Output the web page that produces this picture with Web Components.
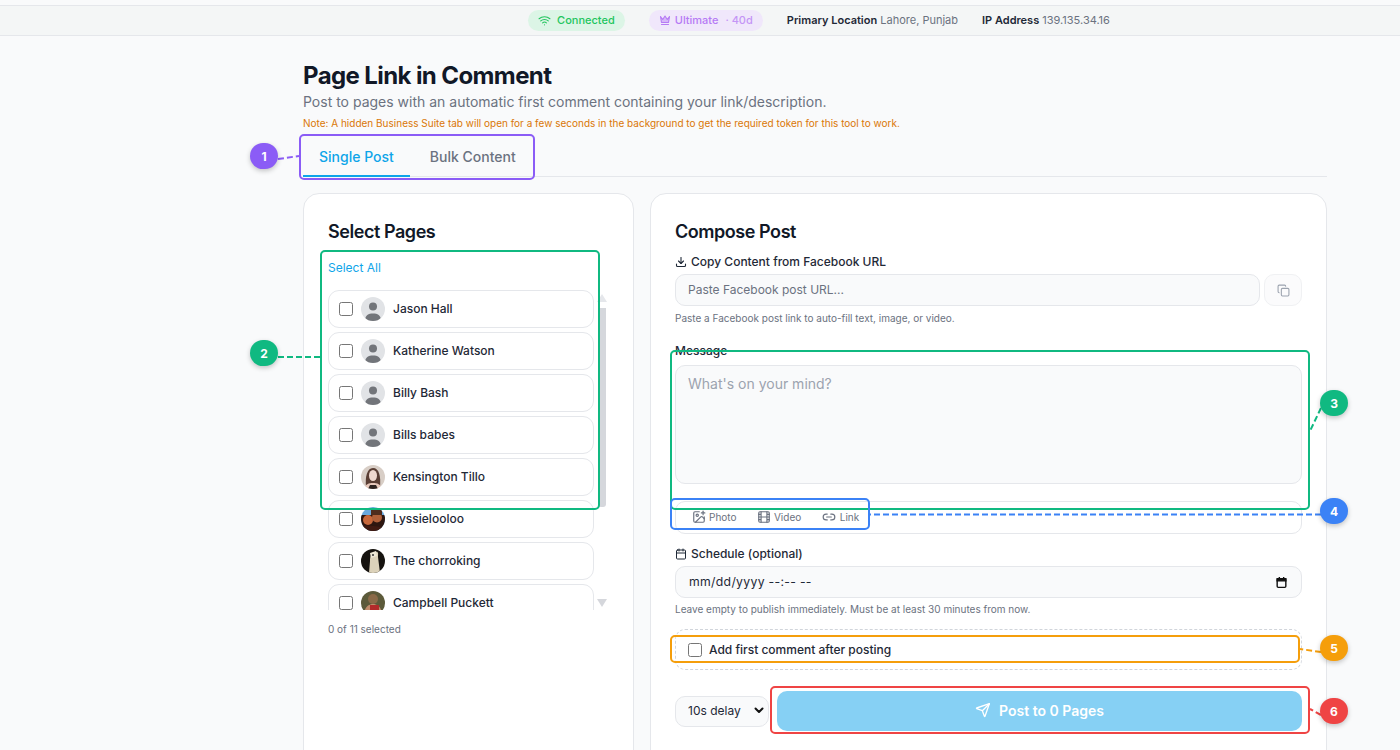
<!DOCTYPE html>
<html><head><meta charset="utf-8">
<style>
html,body{margin:0;padding:0;height:750px;overflow:hidden;background:#f9fafb;font-family:Inter,"Liberation Sans",sans-serif;color:#111827}
</style></head><body>
<template id="t-top"><style>
:host{display:flex;align-items:center;justify-content:center;gap:24px;height:31px;box-sizing:border-box;margin-top:5px;background:#f4f6f6;border-top:1px solid #e5e7eb;border-bottom:1px solid #e5e7eb;font-size:11px;color:#6b7280;padding-left:238px}
.pill{display:inline-flex;align-items:center;gap:6px;height:21px;box-sizing:border-box;border-radius:11px;padding:0 10px 1px;font-weight:500}
.g{background:#dcf5e6;color:#22c55e}.p{background:#f0e7fb;color:#b67af5;gap:4px}
b{font-weight:600;color:#1f2937}.i{white-space:pre;padding-bottom:1px}
.f{opacity:.75}
</style>
<span class="pill g"><svg width="13" height="13" viewBox="0 0 24 24" fill="none" stroke="currentColor" stroke-width="2" stroke-linecap="round"><path d="M2 8.800a15 15 0 0 1 20 0"/><path d="M5 12.900a10 10 0 0 1 14 0"/><path d="M8.500 16.400a5 5 0 0 1 7 0"/><path d="M12 20h.01"/></svg>Connected</span>
<span class="pill p"><svg width="12" height="12" viewBox="0 0 24 24" fill="#b67af5" fill-opacity=".45" stroke="currentColor" stroke-width="2.200" stroke-linejoin="round" stroke-linecap="round"><path d="M3 5l4.500 6L12 4l4.500 7L21 5l-2 12H5z"/><path d="M5 21h14"/></svg>Ultimate<span class="f">&nbsp;· 40d</span></span>
<span class="i"><b>Primary Location</b> Lahore, Punjab</span>
<span class="i"><b>IP Address</b> 139.135.34.16</span>
</template>

<template id="t-tabs"><style>
:host{display:flex;border-bottom:1px solid #e5e7eb;height:41px;box-sizing:border-box;font-size:14px;font-weight:500;margin-top:6px}
span{display:flex;align-items:center;padding:2px 16px 0;height:41px;margin-bottom:-1px;color:#6b7280;box-sizing:border-box;border-bottom:2px solid transparent}
.a{color:#0ea5e9;border-bottom-color:#0ea5e9}
.b{padding:2px 20px 0}
</style><span class="a">Single Post</span><span class="b">Bulk Content</span></template>

<template id="t-card"><style>
:host{display:block;background:#fff;border:1px solid #e5e7eb;border-radius:16px;padding:24px;box-sizing:border-box;height:640px}
h2{margin:0;font-size:18px;line-height:28px;font-weight:600;letter-spacing:-.45px;color:#111827}
</style><h2><slot name="title"></slot></h2><slot></slot></template>

<template id="t-page"><style>
:host{display:flex;align-items:center;height:38px;box-sizing:border-box;border:1px solid #e5e7eb;border-radius:11px;padding:0 10px;gap:8px;font-size:12px;font-weight:450;color:#1f2937;flex:none;background:#fff}
.c{width:14px;height:14px;border:1px solid #767676;border-radius:2.5px;box-sizing:border-box;background:#fff;flex:none}
.av{width:24px;height:24px;border-radius:50%;overflow:hidden;flex:none;display:block;margin-right:0}
.n{padding-bottom:2px}
::slotted(svg){width:24px;height:24px;display:block}
</style><span class="c"></span><span class="av"><slot name="a"></slot></span><span class="n"><slot></slot></span></template>

<template id="t-scroll"><style>
:host{display:flex;flex-direction:column;align-items:center;width:8px;height:320px;margin-left:4px;position:relative;flex:none}
.u,.d{width:0;height:0;border-left:5px solid transparent;border-right:5px solid transparent}
.u{border-bottom:8px solid #e5e7eb;margin-top:4px}
.t{width:8px;height:199px;margin-top:6px;background:#d5d7dc;border-radius:0 0 3px 3px}
.d{border-top:8px solid #d5d7dc;margin-top:92px}
</style><i class="u"></i><i class="t"></i><i class="d"></i></template>

<template id="t-anno"><style>
:host{position:absolute;display:flex;align-items:center;justify-content:center;width:28px;height:26px;border-radius:13px;background:var(--c);color:#fff;font-size:12px;font-weight:700;box-shadow:0 2px 5px rgba(0,0,0,.22)}
</style><slot></slot></template>

<template id="t-box"><style>
:host{position:absolute;display:block;box-sizing:border-box;border:2px solid var(--c);border-radius:5px;pointer-events:none}
</style></template>

<template id="t-field-label"><style>
:host{display:flex;align-items:center;gap:4px;font-size:12px;font-weight:500;color:#1f2937;line-height:16px}
svg{display:block}
</style><slot></slot></template>

<template id="t-compose"><style>
:host{display:block}
.lab{margin-top:8px}
.row{display:flex;gap:4px;margin-top:4px}
.in{flex:1;height:32px;box-sizing:border-box;background:#f9fafb;border:1px solid #e5e7eb;border-radius:10px;padding:0 12px 2px;display:flex;align-items:center;font-size:12px;color:#6b7280}
.cp{width:38px;height:32px;box-sizing:border-box;border:1px solid #f0f1f3;background:#fbfbfc;border-radius:10px;display:flex;align-items:center;justify-content:center;color:#9ca3af}
.hint{font-size:10px;line-height:14px;color:#6b7280;margin-top:5px}
.hint.h2{margin-top:4px}
.msg{margin-top:18px}
.ta{height:119px;box-sizing:border-box;background:#f9fafb;border:1px solid #e5e7eb;border-radius:10px;padding:9px 12px;font-size:14px;line-height:18px;color:#9ca3af;margin-top:6px}
.tools{height:33px;box-sizing:border-box;border:1px solid #e5e7eb;border-radius:10px;display:flex;align-items:center;gap:20.5px;padding:0 16px 1px;margin-top:17px;font-size:10px;color:#6b7280}
.tools span{display:inline-flex;align-items:center;gap:3px}
.tools span.l{gap:4px}
.sch{margin-top:12px}
.dt{height:32px;box-sizing:border-box;background:#f9fafb;border:1px solid #e5e7eb;border-radius:10px;padding:0 13px;display:flex;align-items:center;justify-content:space-between;font-size:12.25px;color:#1f2937;margin-top:4px;letter-spacing:.3px}
.dt span{padding-bottom:2px}
.dash{height:41px;box-sizing:border-box;border:1px dashed #d1d5db;border-radius:10px;margin-top:13px;display:flex;align-items:center;gap:7px;padding:0 12px;font-size:12px;font-weight:500;color:#1f2937}
.c{width:14px;height:14px;border:1px solid #767676;border-radius:2.5px;box-sizing:border-box}
.foot{display:flex;align-items:center;gap:8px;margin-top:21px}
.sel{width:94px;height:31px;box-sizing:border-box;border:1px solid #e5e7eb;background:#f9fafb;border-radius:10px;display:flex;align-items:center;justify-content:space-between;padding:0 3px 2px 12px;font-size:12px;color:#1f2937}
.btn{flex:1;height:40px;box-sizing:border-box;padding-bottom:2px;background:#86d0f4;border-radius:10px;color:#fff;font-size:14px;font-weight:600;display:flex;align-items:center;justify-content:center;gap:8px}
</style>
<field-label class="lab"><svg width="12" height="12" viewBox="0 0 24 24" fill="none" stroke="#1f2937" stroke-width="2.200" stroke-linecap="round" stroke-linejoin="round"><path d="M12 3v12"/><path d="M7 10l5 5 5-5"/><path d="M3 16v3a2 2 0 0 0 2 2h14a2 2 0 0 0 2-2v-3"/></svg>Copy Content from Facebook URL</field-label>
<div class="row"><div class="in">Paste Facebook post URL...</div><div class="cp"><svg width="13" height="13" viewBox="0 0 24 24" fill="none" stroke="currentColor" stroke-width="2" stroke-linecap="round" stroke-linejoin="round"><rect x="8" y="8" width="14" height="14" rx="2"/><path d="M4 16a2 2 0 0 1-2-2V4a2 2 0 0 1 2-2h10a2 2 0 0 1 2 2"/></svg></div></div>
<div class="hint">Paste a Facebook post link to auto-fill text, image, or video.</div>
<field-label class="msg">Message</field-label>
<div class="ta">What's on your mind?</div>
<div class="tools">
<span><svg width="14" height="14" viewBox="0 0 24 24" fill="none" stroke="currentColor" stroke-width="2" stroke-linecap="round" stroke-linejoin="round"><path d="M16 5h6"/><path d="M19 2v6"/><path d="M21 11.500V19a2 2 0 0 1-2 2H5a2 2 0 0 1-2-2V5a2 2 0 0 1 2-2h7.500"/><path d="M21 15l-3.100-3.100a2 2 0 0 0-2.800 0L6 21"/><circle cx="9" cy="9" r="2"/></svg>Photo</span>
<span><svg width="14" height="14" viewBox="0 0 24 24" fill="none" stroke="currentColor" stroke-width="2" stroke-linecap="round" stroke-linejoin="round"><rect x="3" y="3" width="18" height="18" rx="2"/><path d="M7 3v18M17 3v18M3 7.500h4M3 12h18M3 16.500h4M17 7.500h4M17 16.500h4"/></svg>Video</span>
<span class="l"><svg width="14" height="14" viewBox="0 0 24 24" fill="none" stroke="currentColor" stroke-width="2" stroke-linecap="round" stroke-linejoin="round"><path d="M9 17H7A5 5 0 0 1 7 7h2"/><path d="M15 7h2a5 5 0 1 1 0 10h-2"/><path d="M8 12h8"/></svg>Link</span>
</div>
<field-label class="sch"><svg width="12" height="12" viewBox="0 0 24 24" fill="none" stroke="#1f2937" stroke-width="2" stroke-linecap="round" stroke-linejoin="round"><path d="M8 2v4M16 2v4"/><rect x="3" y="4" width="18" height="18" rx="2"/><path d="M3 10h18"/></svg>Schedule (optional)</field-label>
<div class="dt"><span>mm/dd/yyyy --:-- --</span><svg width="13" height="13" viewBox="0 0 24 24" fill="none" stroke="#111" stroke-width="2.600"><rect x="4" y="5" width="16" height="16" rx="2"/><path d="M4 5h16v4H4z" fill="#111"/><path d="M8 2v3M16 2v3"/></svg></div>
<div class="hint h2">Leave empty to publish immediately. Must be at least 30 minutes from now.</div>
<div class="dash"><span class="c"></span>Add first comment after posting</div>
<div class="foot"><div class="sel">10s delay<svg width="12" height="12" viewBox="0 0 24 24" fill="none" stroke="#111" stroke-width="4" stroke-linecap="round" stroke-linejoin="round"><path d="M5 9l7 7 7-7"/></svg></div>
<div class="btn"><svg width="16" height="16" viewBox="0 0 24 24" fill="none" stroke="#fff" stroke-width="2" stroke-linecap="round" stroke-linejoin="round"><path d="M21.500 2.500L11 13"/><path d="M21.500 2.500L15 21.500a.5.5 0 0 1-.9 0L11 13 2.500 9.900a.5.5 0 0 1 0-.9z"/></svg>Post to 0 Pages</div></div>
</template>

<template id="t-app"><style>
:host{display:block}
.shell{padding-left:230px}
main{width:1024px;margin:0 auto;padding-top:24px}
h1{margin:0;font-size:24px;line-height:32px;font-weight:700;letter-spacing:-.6px;color:#111827}
.sub{font-size:14px;line-height:20px;color:#6b7280}
.note{font-size:10px;line-height:14px;color:#d97706;margin-top:4px}
.grid{display:grid;grid-template-columns:331px 677px;gap:16px;margin-top:16px}
.all{font-size:12px;line-height:16px;color:#0ea5e9;margin-top:14px}
.wrap{display:flex;margin-top:14px}
.list{width:266px;height:320px;overflow:hidden;display:flex;flex-direction:column;gap:4px}
.cnt{font-size:10px;line-height:14px;color:#6b7280;margin-top:12px}
</style>
<top-bar></top-bar>
<div class="shell"><main>
<h1>Page Link in Comment</h1>
<div class="sub">Post to pages with an automatic first comment containing your link/description.</div>
<div class="note">Note: A hidden Business Suite tab will open for a few seconds in the background to get the required token for this tool to work.</div>
<tab-bar></tab-bar>
<div class="grid">
<ui-card><span slot="title">Select Pages</span>
<div class="all">Select All</div>
<div class="wrap"><div class="list" id="list"></div><fake-scroll></fake-scroll></div>
<div class="cnt">0 of 11 selected</div>
</ui-card>
<ui-card><span slot="title">Compose Post</span><compose-form></compose-form></ui-card>
</div>
</main></div>
</template>

<script>
function def(n,t){customElements.define(n,class extends HTMLElement{constructor(){super();this.attachShadow({mode:'open'}).appendChild(document.getElementById(t).content.cloneNode(true))}})}
def('top-bar','t-top');def('tab-bar','t-tabs');def('ui-card','t-card');def('page-row','t-page');def('fake-scroll','t-scroll');def('anno-dot','t-anno');def('anno-box','t-box');def('field-label','t-field-label');def('compose-form','t-compose');
const P='<rect width="24" height="24" fill="#e1e3e6"/><circle cx="12" cy="9.500" r="4" fill="#72757a"/><path d="M4 24c0-6 3.500-7.500 8-7.500s8 1.500 8 7.500z" fill="#72757a"/>';
const A=[
['Jason Hall',P],['Katherine Watson',P],['Billy Bash',P],['Bills babes',P],
['Kensington Tillo','<rect width="24" height="24" fill="#d8cec6"/><path d="M5 22c-1-10 1-19 7-19s8 8 7 19z" fill="#5a3e34"/><ellipse cx="12" cy="10.500" rx="4" ry="5.500" fill="#efd8ce"/><path d="M3 24c1-5 5-6 9-6s8 1 9 6z" fill="#e7c8bb"/><path d="M7 24l2-4h6l2 4z" fill="#2d2320"/>'],
['Lyssielooloo','<rect width="24" height="24" fill="#6aa9de"/><rect y="8" width="24" height="16" fill="#2e1610"/><ellipse cx="7" cy="13" rx="5" ry="5" fill="#c8683c"/><ellipse cx="16" cy="10.500" rx="5" ry="5" fill="#b0603a"/><path d="M0 19c6-1 16 0 24 2v3H0z" fill="#401a12"/><path d="M10 3h11v5H10z" fill="#4e2c1e"/>'],
['The chorroking','<rect width="24" height="24" fill="#16130f"/><path d="M8 24l1-12c0-4 1-8 5-9s3 2 3 5l2 16z" fill="#dcd2ba"/><path d="M9 4l6-2 1 5-6 2z" fill="#eee8d6"/><circle cx="12" cy="6" r="1" fill="#333"/>'],
['Campbell Puckett','<rect width="24" height="24" fill="#5c5a3a"/><circle cx="12" cy="8" r="5" fill="#8a6a48"/><path d="M3 24c0-7 4-11 9-11s9 4 9 11z" fill="#c08c6c"/><rect x="9" y="14" width="9" height="6" fill="#b22a2a"/>']];
def('app-root','t-app');
</script>
<app-root></app-root>
<script>
const list=document.querySelector('app-root').shadowRoot.getElementById('list');
A.forEach(([n,s])=>{const r=document.createElement('page-row');r.innerHTML='<svg slot="a" viewBox="0 0 24 24">'+s+'</svg>'+n;list.appendChild(r)});
</script>
<svg style="position:absolute;left:0;top:0;width:1400px;height:750px;pointer-events:none" width="1400" height="750" fill="none" stroke-width="2" stroke-dasharray="6 3">
<path d="M278 159L299 156" stroke="#8b5cf6"/>
<path d="M278 357H321" stroke="#10b981"/>
<path d="M1321 408L1310 431" stroke="#10b981"/>
<path d="M1321 514.500H870" stroke="#3b82f6"/>
<path d="M1321 652L1300 649" stroke="#f59e0b"/>
<path d="M1321 715L1310 709" stroke="#ef4444"/>
</svg>
<anno-box style="--c:#8b5cf6;left:299px;top:134px;width:236px;height:46px"></anno-box>
<anno-box style="--c:#10b981;left:320px;top:250px;width:280px;height:260px"></anno-box>
<anno-box style="--c:#10b981;left:670px;top:350px;width:640px;height:160px"></anno-box>
<anno-box style="--c:#3b82f6;left:670px;top:498px;width:200px;height:32px"></anno-box>
<anno-box style="--c:#f59e0b;left:670px;top:635px;width:630px;height:28px"></anno-box>
<anno-box style="--c:#ef4444;left:770px;top:686px;width:540px;height:48px"></anno-box>
<anno-dot style="--c:#8b5cf6;left:250px;top:143px">1</anno-dot>
<anno-dot style="--c:#10b981;left:250px;top:340px">2</anno-dot>
<anno-dot style="--c:#10b981;left:1320px;top:390px">3</anno-dot>
<anno-dot style="--c:#3b82f6;left:1320px;top:498px">4</anno-dot>
<anno-dot style="--c:#f59e0b;left:1320px;top:635px">5</anno-dot>
<anno-dot style="--c:#ef4444;left:1320px;top:698px">6</anno-dot>
</body></html>
